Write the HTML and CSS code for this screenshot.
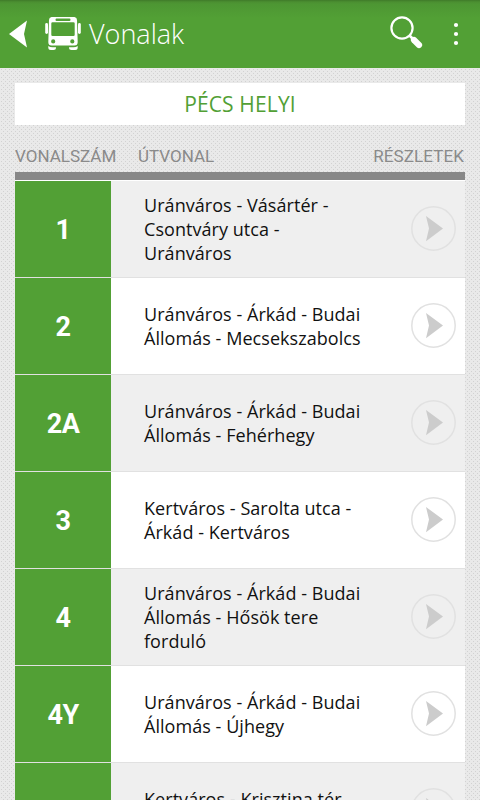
FILE: index.html
```html
<!DOCTYPE html>
<html lang="hu">
<head>
<meta charset="utf-8">
<title>Vonalak</title>
<link rel="stylesheet" href="styles.css">
</head>
<body>
<svg width="0" height="0" class="defs" aria-hidden="true">
  <symbol id="go" viewBox="0 0 45 45">
    <circle cx="22.5" cy="22.5" r="21.7" fill="none" stroke="#e1e1e1" stroke-width="1.5"/>
    <path d="M15 10 32 22.5 15 35.2 18 22.5Z" fill="#ccc"/>
  </symbol>
</svg>
<header class="bar">
  <svg class="back" width="18" height="28" viewBox="0 0 18 28"><path d="M0 14 18 .5 15 14 18 27.5Z" fill="#fff"/></svg>
  <svg class="bus" width="36" height="34" viewBox="0 0 36 34">
    <g fill="#fff">
      <path fill-rule="evenodd" d="M6.5 0H29.5Q32 .5 32 3L32.7 25Q32.7 28.6 29.5 28.6H6.5Q3.3 28.6 3.3 25L4 3Q4 .5 6.5 0ZM11.5 1.5Q10.5 1.5 10.5 2.7T11.5 3.9H24.5Q25.5 3.9 25.5 2.7T24.5 1.5ZM7.5 5.3Q6.3 5.3 6.3 6.5V17.7Q6.3 19 7.5 19H28.5Q29.7 19 29.7 17.7V6.5Q29.7 5.3 28.5 5.3ZM8.2 22.3A2.1 2.1 0 1 0 8.2 26.5 2.1 2.1 0 1 0 8.2 22.3ZM27.3 22.3A2.1 2.1 0 1 0 27.3 26.5 2.1 2.1 0 1 0 27.3 22.3Z"/>
      <rect x=".2" y="6" width="2.8" height="11" rx="1.4"/>
      <rect x="33" y="6" width="2.8" height="11" rx="1.4"/>
      <path d="M3.3 29Q5 30.2 7.5 30.2H11V30.5Q11 33 8.5 33H5.8Q3.3 33 3.3 30.5ZM32.7 29Q31 30.2 28.5 30.2H24V30.5Q24 33 26.5 33H30.2Q32.7 33 32.7 30.5Z"/>
    </g>
  </svg>
  <h1>Vonalak</h1>
  <svg class="search" width="34" height="34" viewBox="0 0 34 34">
    <circle cx="12" cy="12" r="10.6" fill="none" stroke="#fff" stroke-width="2.2"/>
    <path d="M19.5 19.5 24 24" stroke="#fff" stroke-width="2.6"/>
    <path d="M24 24 29 29" stroke="#fff" stroke-width="6.2" stroke-linecap="round"/>
  </svg>
  <svg class="more" width="6" height="24" viewBox="0 0 6 24" fill="#fff"><circle cx="3" cy="3" r="2.1"/><circle cx="3" cy="12" r="2.1"/><circle cx="3" cy="21" r="2.1"/></svg>
</header>
<main>
  <div class="city">PÉCS HELYI</div>
  <div class="heads"><span class="h-num">VONALSZÁM</span><span>ÚTVONAL</span><span class="h-det">RÉSZLETEK</span></div>
  <ul class="lines">
    <li><b>1</b><p>Uránváros - Vásártér -<br>Csontváry utca -<br>Uránváros</p><svg class="go"><use href="#go"/></svg></li>
    <li><b>2</b><p>Uránváros - Árkád - Budai<br>Állomás - Mecsekszabolcs</p><svg class="go"><use href="#go"/></svg></li>
    <li><b>2A</b><p>Uránváros - Árkád - Budai<br>Állomás - Fehérhegy</p><svg class="go"><use href="#go"/></svg></li>
    <li><b>3</b><p>Kertváros - Sarolta utca -<br>Árkád - Kertváros</p><svg class="go"><use href="#go"/></svg></li>
    <li><b>4</b><p>Uránváros - Árkád - Budai<br>Állomás - Hősök tere<br>forduló</p><svg class="go"><use href="#go"/></svg></li>
    <li><b>4Y</b><p>Uránváros - Árkád - Budai<br>Állomás - Újhegy</p><svg class="go"><use href="#go"/></svg></li>
    <li><b></b><p>Kertváros - Krisztina tér<br>&nbsp;</p><svg class="go"><use href="#go"/></svg></li>
  </ul>
</main>
</body>
</html>
```
FILE: styles.css
```css
* { box-sizing: border-box; margin: 0; padding: 0; }
html { height: 100%; overflow: hidden; }
body {
  height: 800px;
  overflow: hidden;
  font-family: "Open Sans", sans-serif;
  background-color: #e9e9e9;
  background-image:
    radial-gradient(circle at 1.5px 1.5px, #d2d2d2 0, #d2d2d2 .4px, transparent .9px),
    radial-gradient(circle at 3.5px 3.5px, #d2d2d2 0, #d2d2d2 .4px, transparent .9px);
  background-size: 4px 4px;
}
.defs { display: block; height: 0; }
.bar {
  height: 68px;
  padding-left: 9px;
  padding-right: 21px;
  display: flex;
  align-items: center;
  background: linear-gradient(#3f7a29 0, #4b8f31 2px, #4d9633 4px, #52a035 18px, #52a035 100%);
}
.back { margin-right: 18px; }
.bus { margin-top: -1px; }
h1 { margin-left: 8px; font-size: 27px; font-weight: 300; line-height: 36px; color: #fff; }
.search { margin-left: auto; margin-right: 29px; margin-top: -3px; }
main { height: 732px; overflow: hidden; padding: 15px 15px 0; }
.city {
  height: 42px;
  line-height: 42px;
  text-align: center;
  font-size: 21px;
  letter-spacing: .15px;
  color: #52a035;
  background: #fff;
}
.heads {
  display: flex;
  height: 47px;
  padding-top: 21px;
  padding-right: 1px;
  font: 17px/20px Roboto, sans-serif;
  color: #8a8a8a;
}
.h-num { width: 123px; }
.h-det { margin-left: auto; letter-spacing: .1px; }
.lines { list-style: none; border-top: 8px solid #888; }
li {
  display: flex;
  align-items: center;
  height: 97px;
  border-top: 1px solid #e1e1e1;
  background: #fff;
}
li:nth-child(odd) { background: #efefef; }
li:first-child { border-top-color: #fff; }
b {
  width: 96px;
  height: 96px;
  line-height: 98px;
  text-align: center;
  font-family: Roboto, sans-serif;
  font-size: 27px;
  letter-spacing: -.6px;
  color: #fff;
  background: #52a035;
}
p { margin-left: 33px; font-size: 18px; line-height: 24px; letter-spacing: .05px; color: #111; white-space: nowrap; }
.go { width: 45px; height: 45px; margin: -1px 9px 0 auto; }
```
